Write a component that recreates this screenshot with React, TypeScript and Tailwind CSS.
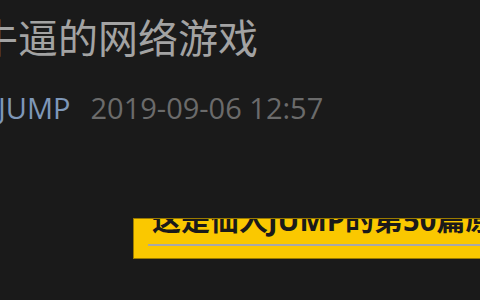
export default function App() {
  return (
    <div
      className="w-[480px] h-[300px] overflow-hidden bg-[#1a1a1a]"
      style={{ fontFamily: '"Open Sans", "Noto Sans CJK SC", sans-serif' }}
    >
      <h1 className="mt-[18px] ml-[-22px] text-[40px] leading-[40px] font-normal text-[#a3a3a3] whitespace-nowrap">
        牛逼的网络游戏
      </h1>
      <div className="mt-[35px] ml-[-60px] flex items-center text-[29px] leading-[29px] whitespace-nowrap">
        <span className="text-[#7e97b8]">仙人JUMP</span>
        <span className="ml-[20px] text-[#6b6b6b]">2019-09-06 12:57</span>
      </div>
      <div className="mt-[96px] ml-[133px] w-[400px] h-[41px] overflow-hidden bg-[#fac800] border border-[#9a7a00]">
        <div className="mt-[-14px] ml-[18px] text-[29px] leading-[30px] font-bold text-[#1a1a1a] whitespace-nowrap">
          这是仙人JUMP的第50篇原创
        </div>
        <div className="mt-[9px] ml-[14px] h-[2px] bg-[#a8a8a8]" />
      </div>
    </div>
  );
}
